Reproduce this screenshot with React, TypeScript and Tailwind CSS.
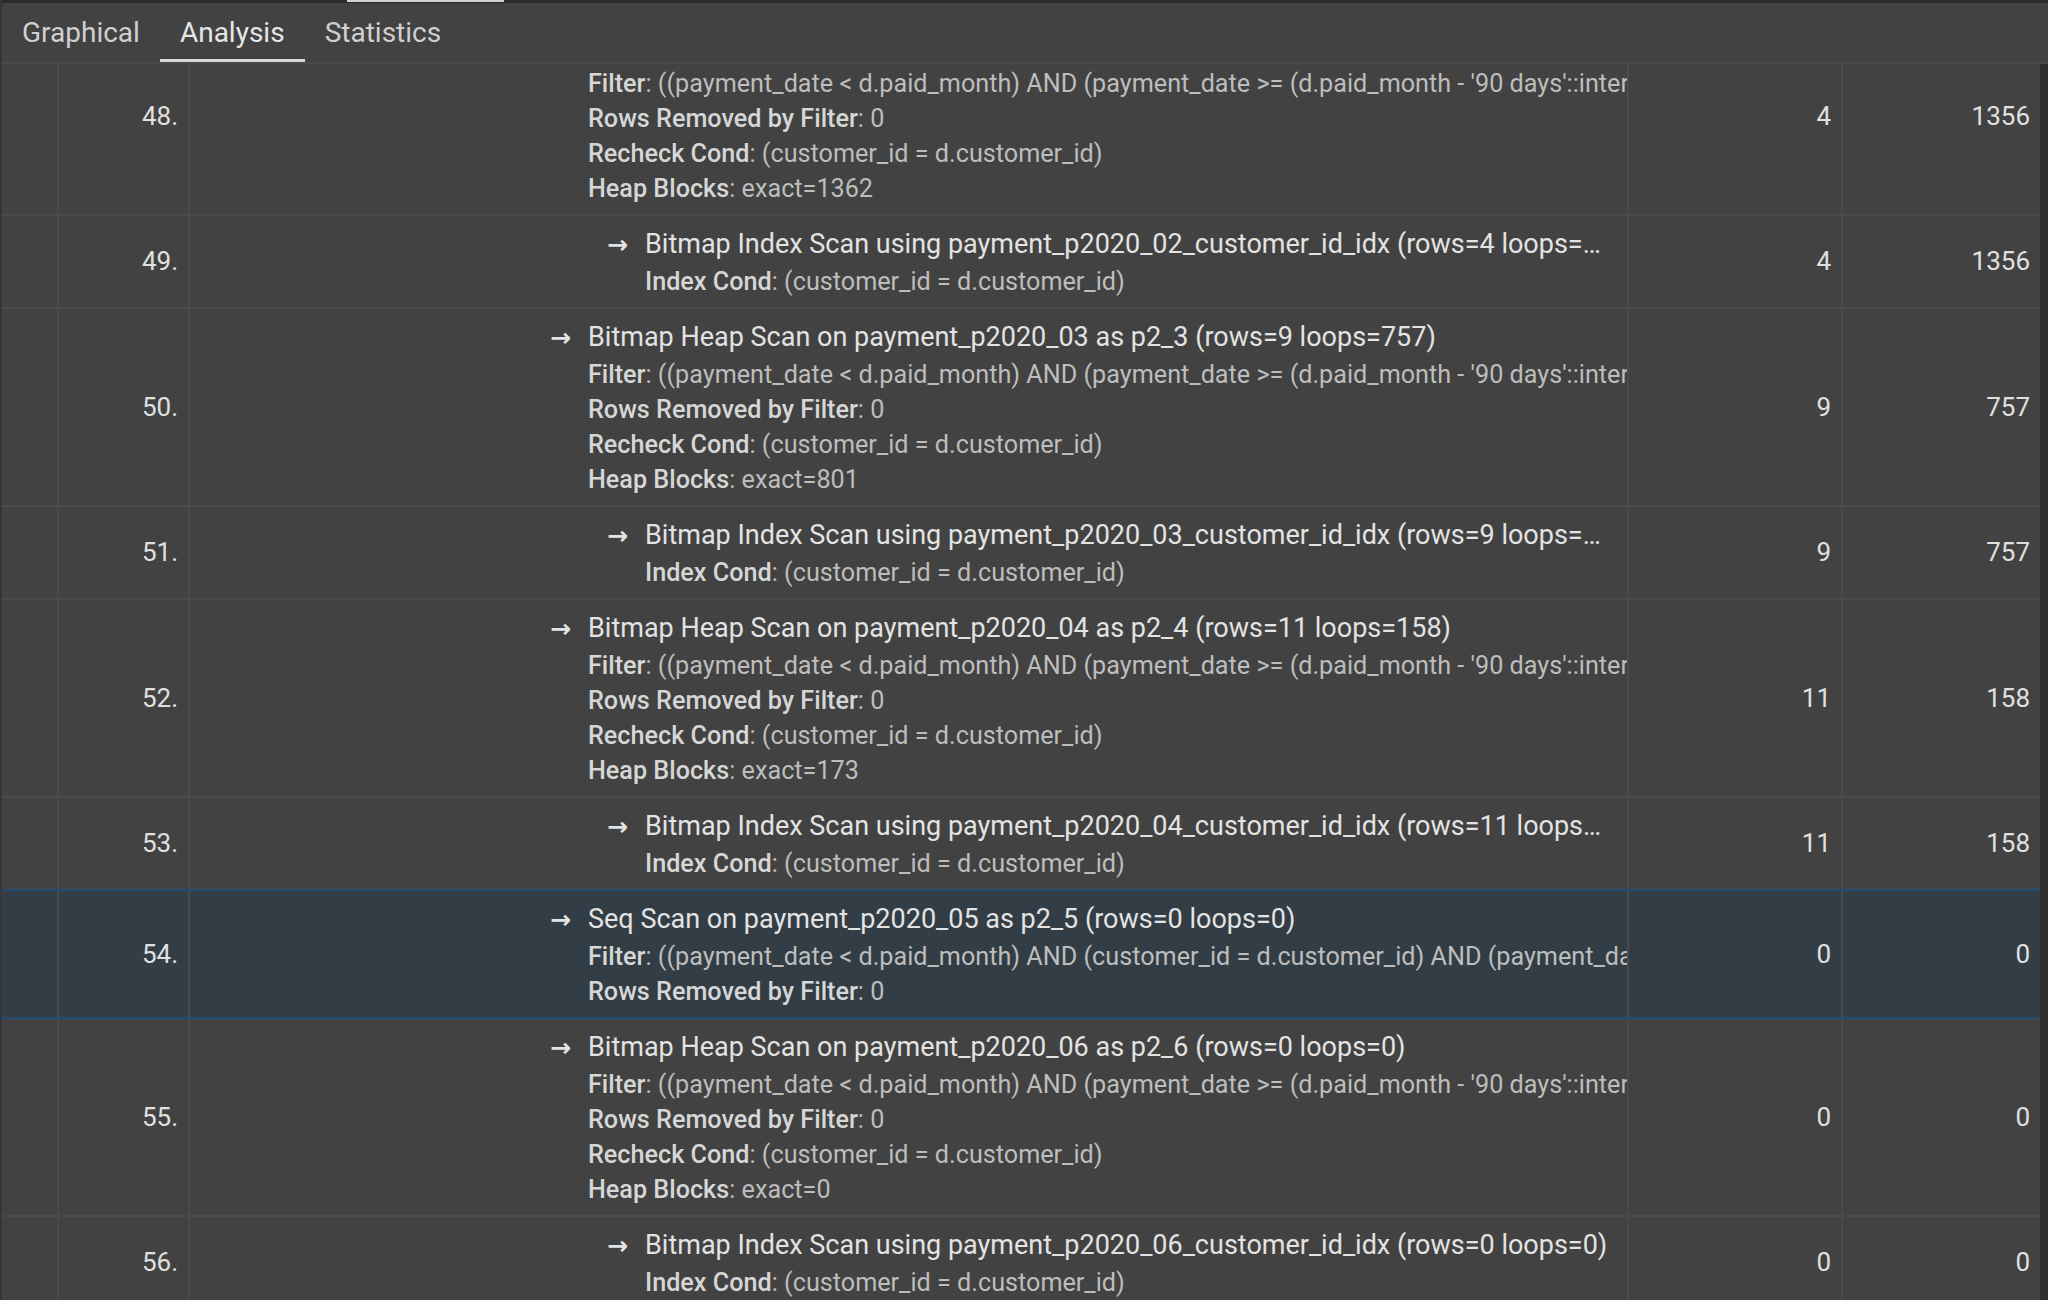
import React from 'react'

type PlanRow = {
  n: number
  nested: boolean
  title: string
  details: [string, string][]
  rows: number
  loops: number
  active?: boolean
}

const FILTER =
  "((payment_date < d.paid_month) AND (payment_date >= (d.paid_month - '90 days'::interval)))"
const RECHECK = '(customer_id = d.customer_id)'

const heapDetails = (exact: number): [string, string][] => [
  ['Filter', FILTER],
  ['Rows Removed by Filter', '0'],
  ['Recheck Cond', RECHECK],
  ['Heap Blocks', `exact=${exact}`],
]

const rows: PlanRow[] = [
  {
    n: 48,
    nested: false,
    title: 'Bitmap Heap Scan on payment_p2020_02 as p2_2 (rows=4 loops=1356)',
    details: heapDetails(1362),
    rows: 4,
    loops: 1356,
  },
  {
    n: 49,
    nested: true,
    title: 'Bitmap Index Scan using payment_p2020_02_customer_id_idx (rows=4 loops=1356)',
    details: [['Index Cond', RECHECK]],
    rows: 4,
    loops: 1356,
  },
  {
    n: 50,
    nested: false,
    title: 'Bitmap Heap Scan on payment_p2020_03 as p2_3 (rows=9 loops=757)',
    details: heapDetails(801),
    rows: 9,
    loops: 757,
  },
  {
    n: 51,
    nested: true,
    title: 'Bitmap Index Scan using payment_p2020_03_customer_id_idx (rows=9 loops=757)',
    details: [['Index Cond', RECHECK]],
    rows: 9,
    loops: 757,
  },
  {
    n: 52,
    nested: false,
    title: 'Bitmap Heap Scan on payment_p2020_04 as p2_4 (rows=11 loops=158)',
    details: heapDetails(173),
    rows: 11,
    loops: 158,
  },
  {
    n: 53,
    nested: true,
    title: 'Bitmap Index Scan using payment_p2020_04_customer_id_idx (rows=11 loops=158)',
    details: [['Index Cond', RECHECK]],
    rows: 11,
    loops: 158,
  },
  {
    n: 54,
    nested: false,
    title: 'Seq Scan on payment_p2020_05 as p2_5 (rows=0 loops=0)',
    details: [
      [
        'Filter',
        "((payment_date < d.paid_month) AND (customer_id = d.customer_id) AND (payment_date >= (d.paid_month - '90 days'::interval)))",
      ],
      ['Rows Removed by Filter', '0'],
    ],
    rows: 0,
    loops: 0,
    active: true,
  },
  {
    n: 55,
    nested: false,
    title: 'Bitmap Heap Scan on payment_p2020_06 as p2_6 (rows=0 loops=0)',
    details: heapDetails(0),
    rows: 0,
    loops: 0,
  },
  {
    n: 56,
    nested: true,
    title: 'Bitmap Index Scan using payment_p2020_06_customer_id_idx (rows=0 loops=0)',
    details: [['Index Cond', RECHECK]],
    rows: 0,
    loops: 0,
  },
]

function PlanTableRow({ row }: { row: PlanRow }) {
  const bg = row.active ? 'bg-[#333d45]' : 'bg-[#424242]'
  const rowBorder = row.active
    ? 'border-y-2 border-[#1f4d74]'
    : 'border-b-2 border-[#4a4a4a]'
  return (
    <div className={`flex ${bg} ${rowBorder} ${row.active ? '-mt-[2px]' : ''}`}>
      <div className="w-[57px] shrink-0 border-r-2 border-[#4a4a4a]" />
      <div className="flex w-[131px] shrink-0 items-center justify-end border-r-2 border-[#4a4a4a] pr-[10px] text-[26px] text-[#e0e0e0]">
        {row.n}.
      </div>
      <div className="min-w-0 flex-1 overflow-hidden border-r-2 border-[#4a4a4a] pt-[9px] pb-[8px]">
        <div className={row.nested ? 'pl-[417px]' : 'pl-[360px]'}>
          <div className="flex items-center pr-[12px] text-[27px] leading-[39px] text-[#e3e3e3]">
            <span className="w-[38px] shrink-0 font-['DejaVu_Sans',sans-serif] text-[25px] font-bold leading-none">
              →
            </span>
            <span className="min-w-0 overflow-hidden text-ellipsis whitespace-nowrap">
              {row.title}
            </span>
          </div>
          <div className="pl-[38px]">
            {row.details.map(([label, value]) => (
              <div
                key={label}
                className="whitespace-nowrap text-[25.2px] leading-[35px] text-[#bdbdbd]"
              >
                <span className="font-medium text-[#d6d6d6]">{label}</span>: {value}
              </div>
            ))}
          </div>
        </div>
      </div>
      <div className="flex w-[214px] shrink-0 items-center justify-end border-r-2 border-[#4a4a4a] pr-[10px] text-[26px] text-[#e0e0e0]">
        {row.rows}
      </div>
      <div className="flex w-[197px] shrink-0 items-center justify-end pr-[10px] text-[26px] text-[#e0e0e0]">
        {row.loops}
      </div>
    </div>
  )
}

export default function App() {
  const tabs = ['Graphical', 'Analysis', 'Statistics']
  return (
    <div className="flex h-[1300px] w-[2048px] flex-col overflow-hidden border-l-2 border-[#363636] bg-[#424242] font-['Roboto',sans-serif]">
      <div className="h-[3px] shrink-0 bg-[#2b2b2b]">
        <div className="ml-[345px] h-[2px] w-[157px] bg-[#d2d2d2]" />
      </div>
      <div className="flex h-[61px] shrink-0 items-stretch border-b-2 border-[#4a4a4a]">
        {tabs.map((t) => (
          <div
            key={t}
            className={`flex items-center px-[20px] pt-[4px] text-[28px] ${
              t === 'Analysis'
                ? 'border-b-[3px] border-[#d8d8d8] text-[#e6e6e6]'
                : 'border-b-[3px] border-transparent text-[#d0d0d0]'
            }`}
          >
            {t}
          </div>
        ))}
      </div>
      <div className="flex min-h-0 flex-1">
        <div className="min-w-0 flex-1 overflow-hidden">
          <div className="-mt-[46px]">
            {rows.map((r) => (
              <PlanTableRow key={r.n} row={r} />
            ))}
          </div>
        </div>
        <div className="w-[8px] shrink-0 bg-[#2e2e2e]" />
      </div>
    </div>
  )
}
